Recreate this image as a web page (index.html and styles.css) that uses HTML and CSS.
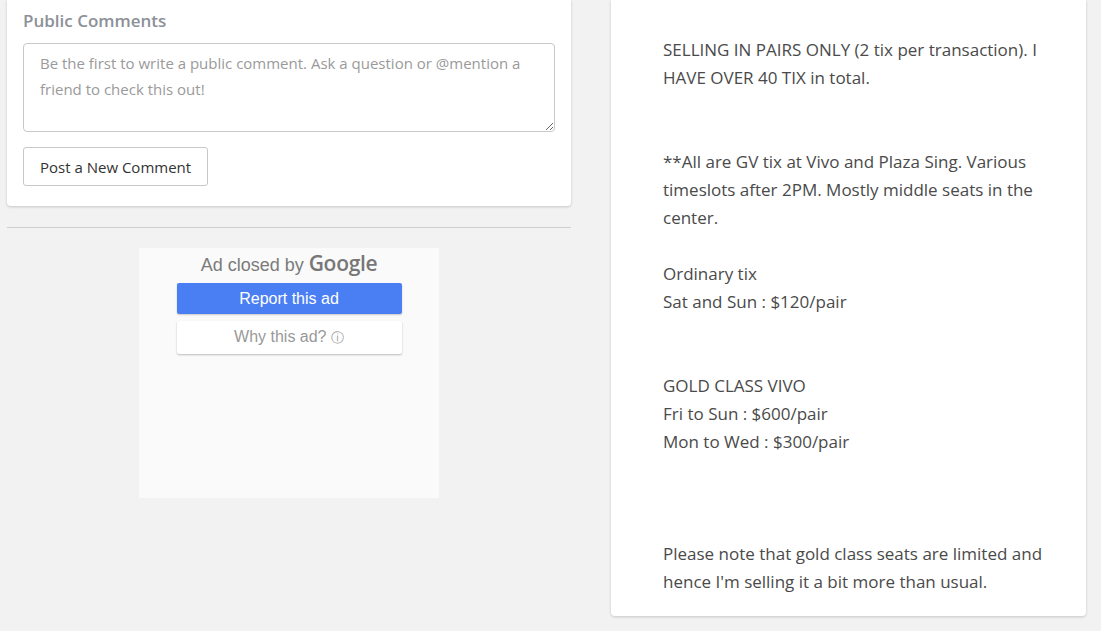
FILE: index.html
```html
<!DOCTYPE html>
<html lang="en">
<head>
	<meta charset="UTF-8"/>
	<meta name="viewport" content="width=device-width,initial-scale=1.0"/>
	<title>Listing</title>
	<link rel="stylesheet" href="styles.css">
</head>
<body>

<div class="page">
	<div class="left">
		<section class="card comments">
			<h3>Public Comments</h3>
			<textarea placeholder="Be the first to write a public comment. Ask a question or @mention a friend to check this out!"></textarea>
			<button class="postBtn">Post a New Comment</button>
		</section>
		<hr class="divider">
		<div class="ad">
			<div class="adClosed">Ad closed by <span class="google">Google</span></div>
			<button class="reportBtn">Report this ad</button>
			<button class="whyBtn">Why this ad? <span class="info">&#9432;</span></button>
		</div>
	</div>

	<div class="right">
		<section class="card description">
			<p>SELLING IN PAIRS ONLY (2 tix per transaction). I HAVE OVER 40 TIX in total.</p>
			<p class="gap2">**All are GV tix at Vivo and Plaza Sing. Various timeslots after 2PM. Mostly middle seats in the center.</p>
			<p class="gap1">Ordinary tix<br>Sat and Sun : $120/pair</p>
			<p class="gap2">GOLD CLASS VIVO<br>Fri to Sun : $600/pair<br>Mon to Wed : $300/pair</p>
			<p class="gap3">Please note that gold class seats are limited and hence I'm selling it a bit more than usual.</p>
		</section>
	</div>
</div>

</body>
</html>
```

FILE: styles.css
```css
* {box-sizing: border-box;}
html, body {
	margin: 0;
	padding: 0;
}
body {
	background: #f2f2f2;
	font-family: "Open Sans", "Noto Sans", sans-serif;
	color: #444;
	height: 631px;
	overflow: hidden;
}
.page {
	display: flex;
	gap: 40px;
	padding: 0 15px 0 7px;
}
.left {
	width: 564px;
	display: flex;
	flex-direction: column;
}
.right {
	width: 475px;
}
.card {
	background: #fff;
	border-radius: 0 0 4px 4px;
	box-shadow: 0 1px 3px rgba(0,0,0,0.18);
}
.comments {
	padding: 8px 16px 20px 16px;
}
.comments h3 {
	margin: 0 0 9px 0;
	font-size: 17px;
	font-weight: 600;
	color: #8c9098;
	line-height: 26px;
}
.comments textarea {
	display: block;
	width: 532px;
	height: 89px;
	border: 1px solid #c8c8c8;
	border-radius: 4px;
	padding: 6px 16px;
	font-family: inherit;
	font-size: 15px;
	line-height: 26px;
	color: #444;
	resize: vertical;
}
.comments textarea::placeholder {
	color: #9a9a9a;
}
.postBtn {
	display: block;
	margin-top: 15px;
	height: 39px;
	padding: 0 16px;
	background: #fff;
	border: 1px solid #c8c8c8;
	border-radius: 3px;
	font-family: inherit;
	font-size: 15px;
	color: #333;
}
.divider {
	margin: 21px 0 20px 0;
	border: 0;
	border-top: 1px solid #cfcfcf;
	height: 0;
}
.ad {
	width: 300px;
	height: 250px;
	margin-left: 132px;
	background: #fafafa;
	display: flex;
	flex-direction: column;
	align-items: center;
	font-family: "Liberation Sans", Arial, sans-serif;
}
.adClosed {
	margin-top: 3px;
	font-size: 18px;
	line-height: 24px;
	color: #7a7a7a;
}
.google {
	font-family: "Open Sans", sans-serif;
	font-weight: 600;
	font-size: 21px;
	letter-spacing: -0.3px;
	color: #777;
}
.reportBtn {
	margin-top: 6px;
	width: 225px;
	height: 31px;
	border: 0;
	border-radius: 2px;
	background: #4a7ff3;
	color: #fff;
	font-family: inherit;
	font-size: 16px;
	box-shadow: 0 1px 2px rgba(0,0,0,0.2);
}
.whyBtn {
	margin-top: 7px;
	width: 225px;
	height: 33px;
	border: 0;
	border-radius: 2px;
	background: #fff;
	color: #999;
	font-family: inherit;
	font-size: 16px;
	box-shadow: 0 1px 2px rgba(0,0,0,0.25);
}
.info {
	font-size: 13px;
}
.description {
	padding: 36px 30px 20px 52px;
	font-size: 17px;
	line-height: 28px;
	color: #4a4a4a;
}
.description p {
	margin: 0;
	width: 390px;
}
.gap1 {margin-top: 28px !important;}
.gap2 {margin-top: 56px !important;}
.gap3 {margin-top: 84px !important;}
```
